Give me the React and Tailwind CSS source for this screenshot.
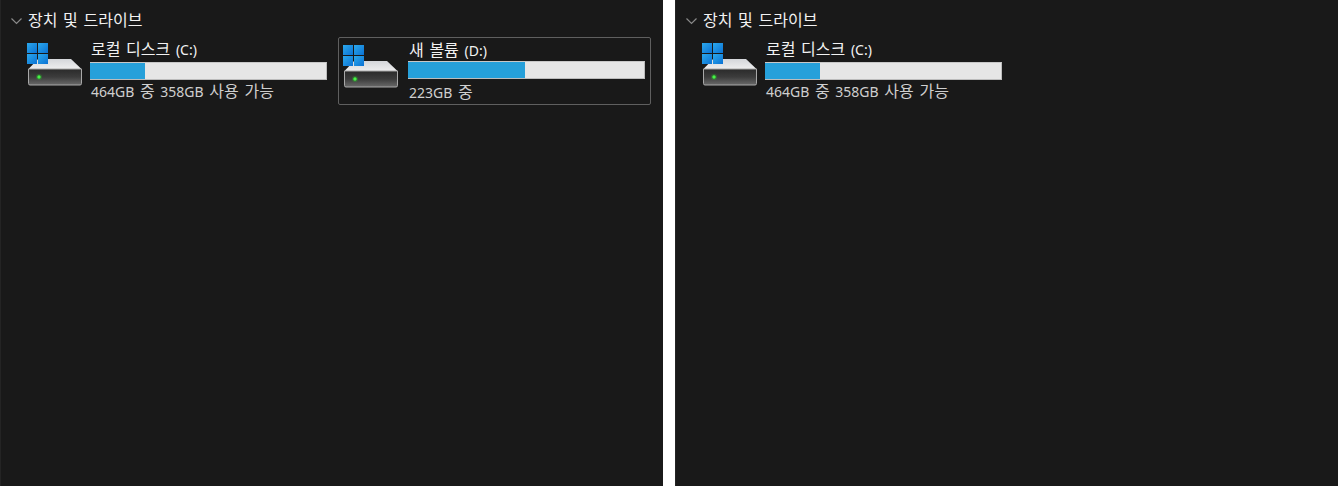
function Mixed({ text }) {
  const parts = text.match(/[\uAC00-\uD7A3]+|[^\uAC00-\uD7A3]+/g);
  return parts.map((part, i) =>
    /[\uAC00-\uD7A3]/.test(part) ? (
      <span key={i} className="text-[16px] font-['Noto_Sans_CJK_KR',sans-serif]">{part}</span>
    ) : (
      <span key={i} className="text-[14px] font-['Noto_Sans',sans-serif]">{part}</span>
    )
  );
}

function DriveIcon({ id, low }) {
  return (
    <svg width="56" height="44" viewBox="0 0 56 44" className={`shrink-0 ${low ? "mt-[2px]" : ""}`}>
      <defs>
        <linearGradient id={`body${id}`} x1="0" y1="0" x2="0" y2="1">
          <stop offset="0" stopColor="#2a2a2a" />
          <stop offset="0.5" stopColor="#3c3c3c" />
          <stop offset="1" stopColor="#6a6a6a" />
        </linearGradient>
        <linearGradient id={`top${id}`} x1="0" y1="0" x2="0" y2="1">
          <stop offset="0" stopColor="#d4d6da" />
          <stop offset="1" stopColor="#eeeeef" />
        </linearGradient>
        <linearGradient id={`win${id}`} x1="0" y1="0" x2="1" y2="1">
          <stop offset="0" stopColor="#2ba8ec" />
          <stop offset="1" stopColor="#0b72d4" />
        </linearGradient>
      </defs>
      <path d="M11 16H44L54.5 26H1.5Z" fill={`url(#top${id})`} />
      <path d="M1.5 26H54.5V40.5Q54.5 42 53 42H3Q1.5 42 1.5 40.5Z" fill={`url(#body${id})`} stroke="#a8a8a8" strokeWidth="1" />
      <circle cx="12" cy="34" r="3" fill="#22c722" opacity="0.3" />
      <circle cx="12" cy="34" r="1.7" fill="#45f545" />
      <rect x="0" y="0" width="10" height="10" fill={`url(#win${id})`} />
      <rect x="11" y="0" width="10" height="10" fill={`url(#win${id})`} />
      <rect x="0" y="11" width="10" height="10" fill={`url(#win${id})`} />
      <rect x="11" y="11" width="10" height="10" fill={`url(#win${id})`} />
    </svg>
  );
}

function Drive({ id, name, pct, info, selected }) {
  return (
    <div className={`w-[313px] h-[68px] rounded-[2px] border pl-[4px] pt-[5px] flex ${selected ? "border-[#5f5f5f]" : "border-transparent"}`}>
      <DriveIcon id={id} low={selected} />
      <div className={`w-[237px] leading-[20px] [word-spacing:2px] ${selected ? "ml-[9px] -mt-[4px]" : "ml-[7px] -mt-[5px]"}`}>
        <div className={`pl-[1px] text-[#f2f2f2] whitespace-nowrap ${selected ? "h-[22px]" : "h-[24px]"}`}>
          <Mixed text={name} />
        </div>
        <div className="h-[18px] bg-[#e6e6e6] border border-[#bcbcbc] border-l-0 border-t-[#c8c8c8]">
          <div className="h-full bg-[#26a0da]" style={{ width: `${pct}%` }} />
        </div>
        <div className={`pl-[1px] h-[20px] text-[#cfcfcf] whitespace-nowrap ${selected ? "mt-[2px]" : "mt-0"}`}>
          <Mixed text={info} />
        </div>
      </div>
    </div>
  );
}

function Panel({ children }) {
  return (
    <div className="w-[663px] h-[486px] bg-[#191919] border-l border-l-[#242424] pt-[10px] pl-[10px]">
      <div className="flex items-center h-[20px]">
        <svg width="11" height="7" viewBox="0 0 11 7" fill="none" className="mt-[3px]">
          <path d="M0.5 0.5L5.5 5.5L10.5 0.5" stroke="#8a8a8a" strokeWidth="1.2" />
        </svg>
        <span className="ml-[6px] leading-[20px] text-[#f2f2f2] whitespace-nowrap [word-spacing:2px]">
          <Mixed text="장치 및 드라이브" />
        </span>
      </div>
      <div className="flex gap-[3px] mt-[7px] ml-[11px]">{children}</div>
    </div>
  );
}

export default function App() {
  return (
    <div className="w-[1338px] h-[486px] bg-white flex gap-[12px] overflow-hidden">
      <Panel>
        <Drive id="a" name="로컬 디스크 (C:)" pct={23.2} info="464GB 중 358GB 사용 가능" />
        <Drive id="b" name="새 볼륨 (D:)" pct={49.4} info="223GB 중" selected />
      </Panel>
      <Panel>
        <Drive id="c" name="로컬 디스크 (C:)" pct={23.2} info="464GB 중 358GB 사용 가능" />
      </Panel>
    </div>
  );
}
